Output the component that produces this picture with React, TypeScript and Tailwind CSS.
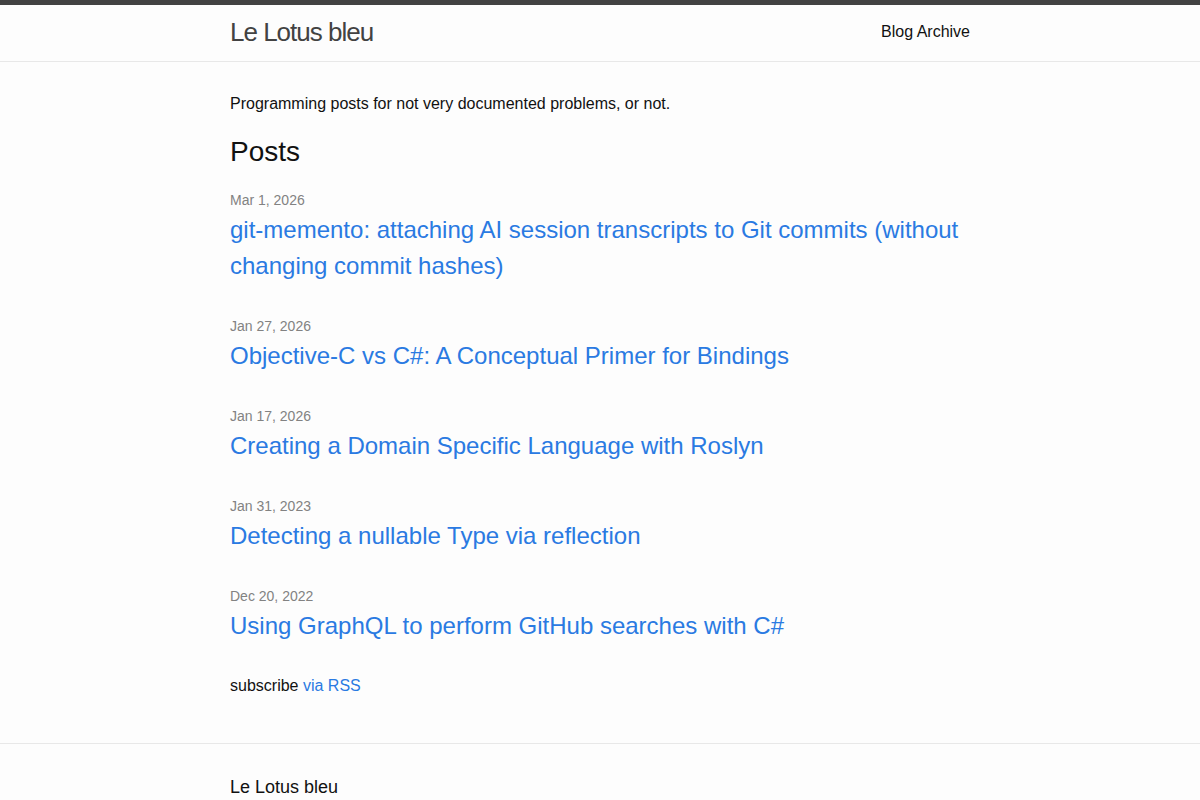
const posts = [
  {
    date: "Mar 1, 2026",
    title: "git-memento: attaching AI session transcripts to Git commits (without changing commit hashes)",
  },
  { date: "Jan 27, 2026", title: "Objective-C vs C#: A Conceptual Primer for Bindings" },
  { date: "Jan 17, 2026", title: "Creating a Domain Specific Language with Roslyn" },
  { date: "Jan 31, 2023", title: "Detecting a nullable Type via reflection" },
  { date: "Dec 20, 2022", title: "Using GraphQL to perform GitHub searches with C#" },
];

function Wrapper({ children, className = "" }: { children: React.ReactNode; className?: string }) {
  return <div className={"max-w-[800px] mx-auto px-[30px] " + className}>{children}</div>;
}

export default function App() {
  return (
    <div
      className="min-h-screen bg-[#fdfdfd] text-[#111111] text-[16px] leading-6"
      style={{ fontFamily: '"Liberation Sans", Arial, Helvetica, sans-serif' }}
    >
      {/* header */}
      <header className="border-t-[5px] border-t-[#424242] border-b border-b-[#e8e8e8] min-h-[62px]">
        <Wrapper className="flex justify-between items-center">
          <a href="#" className="text-[26px] font-light tracking-[-1px] leading-[54px] text-[#424242]">
            Le Lotus bleu
          </a>
          <nav className="leading-[54px]">
            <a href="#" className="text-[#111111]">Blog Archive</a>
          </nav>
        </Wrapper>
      </header>

      <main className="py-[30px]">
        <Wrapper>
          <p className="mb-[15px]">Programming posts for not very documented problems, or not.</p>
          <h2 className="text-[28px] leading-[42px] mb-[15px]">Posts</h2>
          <ul>
            {posts.map((p) => (
              <li key={p.date} className="mb-[30px]">
                <div className="h-6 leading-6 text-[14px] text-[#828282]">{p.date}</div>
                <h3 className="text-[24px] leading-[36px]">
                  <a href="#" className="text-[#2a7ae2]">{p.title}</a>
                </h3>
              </li>
            ))}
          </ul>
          <p className="mb-[15px]">
            subscribe <a href="#" className="text-[#2a7ae2]">via RSS</a>
          </p>
        </Wrapper>
      </main>

      <footer className="border-t border-t-[#e8e8e8] py-[30px]">
        <Wrapper>
          <h2 className="text-[18px] leading-[27px] mb-[15px]">Le Lotus bleu</h2>
          <div className="flex gap-4 text-[15px] text-[#828282]">
            <ul className="w-1/2">
              <li>Le Lotus bleu</li>
            </ul>
            <p className="w-1/2">Programming posts for not very documented problems, or not.</p>
          </div>
        </Wrapper>
      </footer>
    </div>
  );
}
